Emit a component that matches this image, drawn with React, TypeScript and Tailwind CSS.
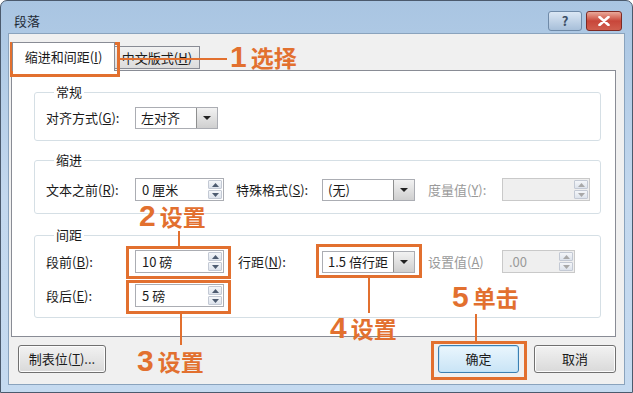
import React from "react";

const cjk = { fontFamily: '"Noto Sans CJK SC", "Liberation Sans", sans-serif' };

function Spin({ value, disabled }: { value: string; disabled?: boolean }) {
  return (
    <div
      className={`flex h-[23px] w-full border ${
        disabled ? "border-[#c9c9c9] bg-[#efefef] text-[#9a9a9a]" : "border-[#abadb3] bg-white text-[#1a1a1a]"
      }`}
    >
      <span className="flex-1 pl-[6px] text-[13px] leading-[21px]">{value}</span>
      <div className="flex w-[16px] flex-col gap-px p-px">
        <div className="flex flex-1 items-center justify-center rounded-[1px] border border-[#c3c9d4] bg-gradient-to-b from-[#f4f6f9] to-[#dde3ec]">
          <svg width="7" height="4" viewBox="0 0 7 4">
            <path d="M0 4 L3.5 0 L7 4 Z" fill={disabled ? "#a8a8a8" : "#4d5b70"} />
          </svg>
        </div>
        <div className="flex flex-1 items-center justify-center rounded-[1px] border border-[#c3c9d4] bg-gradient-to-b from-[#f4f6f9] to-[#dde3ec]">
          <svg width="7" height="4" viewBox="0 0 7 4">
            <path d="M0 0 L7 0 L3.5 4 Z" fill={disabled ? "#a8a8a8" : "#4d5b70"} />
          </svg>
        </div>
      </div>
    </div>
  );
}

function Combo({ value }: { value: string }) {
  return (
    <div className="flex h-[22px] w-full border border-[#abadb3] bg-white">
      <span className="flex-1 pl-[5px] text-[13px] leading-[20px] text-[#1a1a1a] whitespace-nowrap">{value}</span>
      <div className="flex w-[21px] items-center justify-center border-l border-[#8e8f8f] bg-gradient-to-b from-[#f2f2f2] to-[#cfcfcf]">
        <svg width="8" height="4" viewBox="0 0 8 4">
          <path d="M0 0 L8 0 L4 4 Z" fill="#222" />
        </svg>
      </div>
    </div>
  );
}

function Label({ children, w, disabled }: { children: React.ReactNode; w: string; disabled?: boolean }) {
  return (
    <span className={`${w} shrink-0 text-[13px] whitespace-nowrap ${disabled ? "text-[#9a9a9a]" : "text-[#1a1a1a]"}`}>
      {children}
    </span>
  );
}

function Group({ title, className, children }: { title: string; className: string; children: React.ReactNode }) {
  return (
    <fieldset className={`ml-[22px] mr-[14px] rounded-[3px] border border-[#d5dfe5] pl-[11px] ${className}`}>
      <legend className="ml-[8px] px-[2px] text-[13px] leading-[16px] text-[#1a1a1a]">{title}</legend>
      {children}
    </fieldset>
  );
}

function Btn({ children, primary, w }: { children: React.ReactNode; primary?: boolean; w: string }) {
  return (
    <button
      className={`${w} h-[28px] rounded-[3px] border text-[13px] text-[#1a1a1a] bg-gradient-to-b ${
        primary
          ? "border-[#3c7fb1] from-[#eaf6fd] to-[#c9e4f6] shadow-[inset_0_0_0_1px_#bfe3f9]"
          : "border-[#707070] from-[#f2f2f2] to-[#d9d9d9] shadow-[inset_0_0_0_1px_#fcfcfc]"
      }`}
    >
      {children}
    </button>
  );
}

const u = (s: string) => <span className="underline">{s}</span>;

export default function App() {
  const orange = "#e2702f";
  return (
    <div
      className="relative h-[393px] w-[633px] overflow-hidden rounded-t-[7px] border border-[#4b5a6d] bg-gradient-to-b from-[#a9c5e2] via-[#c3d8ee] to-[#c5daf0]"
      style={cjk}
    >
      {/* title bar */}
      <div className="flex h-[32px] items-start pl-[13px] pr-[10px]">
        <span className="mt-[11px] text-[13px] leading-[18px] text-[#1e2a36]">段落</span>
        <div className="ml-auto flex gap-[4px] pt-[10px]">
          <div className="flex h-[20px] w-[34px] items-center justify-center rounded-[3px] border border-[#6f8aa8] bg-gradient-to-b from-[#dbe7f4] to-[#a7bfd9] text-[13px] font-bold text-[#3d4f66]">
            ?
          </div>
          <div className="flex h-[20px] w-[36px] items-center justify-center rounded-[3px] border border-[#7d2a24] bg-gradient-to-b from-[#e9a99a] via-[#c8463a] to-[#d05e4e]">
            <svg width="12" height="10" viewBox="0 0 12 10">
              <path d="M1.5 1 L10.5 9 M10.5 1 L1.5 9" stroke="#fff" strokeWidth="2.6" strokeLinecap="round" />
            </svg>
          </div>
        </div>
      </div>

      {/* body */}
      <div className="mx-[7px] flex h-[352px] flex-col border border-[#8aa3bd] bg-[#f0f0f0]">
        {/* tabs */}
        <div className="flex items-end pl-[3px] pt-[8px]">
          <div className="z-10 -mb-px flex h-[29px] w-[103px] items-center justify-center border border-b-0 border-[#898c95] bg-white text-[13px] text-[#1a1a1a]">
            缩进和间距(<span className="underline">I</span>)
          </div>
          <div className="mb-[1px] flex h-[23px] w-[85px] items-center justify-center border border-l-0 border-[#898c95] bg-gradient-to-b from-[#f2f2f2] to-[#dcdcdc] text-[13px] text-[#1a1a1a]">
            中文版式({u("H")})
          </div>
        </div>

        {/* panel */}
        <div className="ml-[2px] flex h-[267px] w-[605px] flex-col border border-[#898c95] bg-white">
          <Group title="常规" className="mt-[13px] pb-[11px] pt-[7px]">
            <div className="flex items-center">
              <Label w="w-[89px]">对齐方式({u("G")}):</Label>
              <div className="w-[83px]">
                <Combo value="左对齐" />
              </div>
            </div>
          </Group>

          <Group title="缩进" className="mt-[11px] pb-[12px] pt-[10px]">
            <div className="flex items-center">
              <Label w="w-[89px]">文本之前({u("R")}):</Label>
              <div className="w-[89px]">
                <Spin value="0 厘米" />
              </div>
              <Label w="ml-[12px] w-[86px]">特殊格式({u("S")}):</Label>
              <div className="w-[93px]">
                <Combo value="(无)" />
              </div>
              <Label w="ml-[13px] w-[74px]" disabled>
                度量值({u("Y")}):
              </Label>
              <div className="w-[88px]">
                <Spin value="" disabled />
              </div>
            </div>
          </Group>

          <Group title="间距" className="mt-[13px] pb-[10px] pt-[7px]">
            <div className="flex flex-col gap-[11px]">
              <div className="flex items-center">
                <Label w="w-[89px]">段前({u("B")}):</Label>
                <div className="w-[89px]">
                  <Spin value="10 磅" />
                </div>
                <Label w="ml-[14px] w-[84px]">行距({u("N")}):</Label>
                <div className="w-[93px]">
                  <Combo value="1.5 倍行距" />
                </div>
                <Label w="ml-[13px] w-[74px]" disabled>
                  设置值({u("A")})
                </Label>
                <div className="w-[73px]">
                  <Spin value=".00" disabled />
                </div>
              </div>
              <div className="flex items-center">
                <Label w="w-[89px]">段后({u("E")}):</Label>
                <div className="w-[89px]">
                  <Spin value="5 磅" />
                </div>
              </div>
            </div>
          </Group>
        </div>

        {/* buttons */}
        <div className="mt-[8px] flex pl-[9px] pr-[8px]">
          <Btn w="w-[88px]">制表位({u("T")})...</Btn>
          <div className="ml-auto flex gap-[15px]">
            <Btn w="w-[81px]" primary>
              确定
            </Btn>
            <Btn w="w-[82px]">取消</Btn>
          </div>
        </div>
      </div>

      {/* annotations */}
      <div className="pointer-events-none absolute left-[9px] top-[41px] h-[35px] w-[110px] border-[3px]" style={{ borderColor: orange }} />
      <div className="absolute left-[119px] top-[57px] h-[2px] w-[107px]" style={{ background: orange }} />
      <Callout left="left-[229px]" top="top-[41px]" n="1" t="选择" color={orange} />

      <Callout left="left-[138px]" top="top-[200px]" n="2" t="设置" color={orange} />
      <div className="absolute left-[177px] top-[230px] h-[16px] w-[2px]" style={{ background: orange }} />
      <div className="absolute left-[125px] top-[245px] h-[33px] w-[105px] border-[3px]" style={{ borderColor: orange }} />
      <div className="absolute left-[125px] top-[279px] h-[34px] w-[105px] border-[3px]" style={{ borderColor: orange }} />
      <div className="absolute left-[179px] top-[313px] h-[31px] w-[2px]" style={{ background: orange }} />
      <Callout left="left-[136px]" top="top-[345px]" n="3" t="设置" color={orange} />

      <div className="absolute left-[315px] top-[243px] h-[34px] w-[106px] border-[3px]" style={{ borderColor: orange }} />
      <div className="absolute left-[367px] top-[277px] h-[35px] w-[2px]" style={{ background: orange }} />
      <Callout left="left-[329px]" top="top-[312px]" n="4" t="设置" color={orange} />

      <Callout left="left-[451px]" top="top-[281px]" n="5" t="单击" color={orange} />
      <div className="absolute left-[474px] top-[313px] h-[28px] w-[2px]" style={{ background: orange }} />
      <div className="absolute left-[430px] top-[340px] h-[39px] w-[96px] border-[3px]" style={{ borderColor: orange }} />
    </div>
  );
}

function Callout({ left, top, n, t, color }: { left: string; top: string; n: string; t: string; color: string }) {
  return (
    <div className={`absolute ${left} ${top} flex items-baseline gap-[4px] leading-none`} style={{ color }}>
      <span className="text-[30px] font-bold" style={{ fontFamily: '"Liberation Sans", sans-serif' }}>
        {n}
      </span>
      <span className="text-[23px] font-bold" style={cjk}>
        {t}
      </span>
    </div>
  );
}
